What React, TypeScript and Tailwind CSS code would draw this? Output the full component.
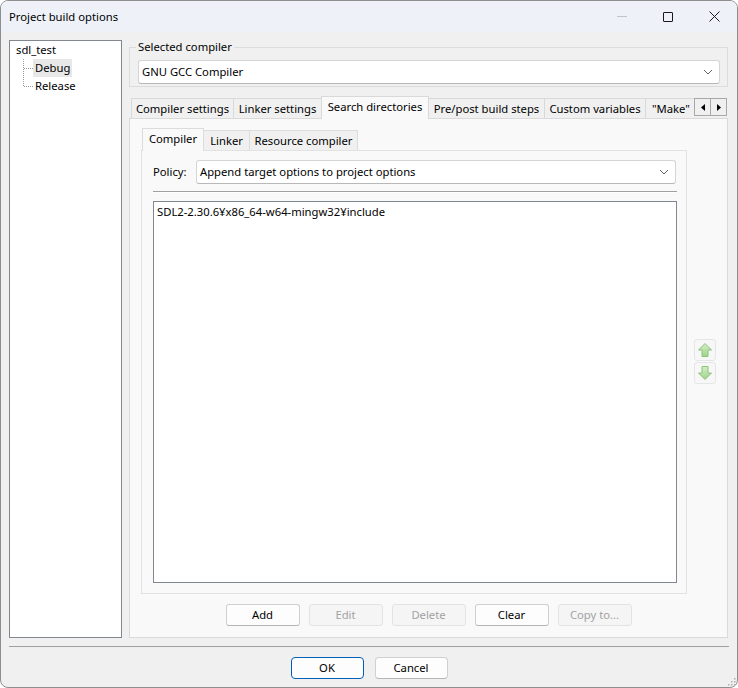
import React from "react";

function Chevron() {
  return (
    <svg width="10" height="6" viewBox="0 0 10 6" className="shrink-0">
      <path d="M1 1 L5 5 L9 1" fill="none" stroke="#606060" strokeWidth="1" />
    </svg>
  );
}

function Combo({ text, className }: { text: string; className: string }) {
  return (
    <div
      className={
        "h-[24px] bg-white border border-[#d5d5d5] border-b-[#b8b8b8] rounded-[3px] flex items-center pl-[3px] pr-[6px] " +
        className
      }
    >
      <span className="flex-1 leading-none">{text}</span>
      <Chevron />
    </div>
  );
}

function Btn({ label, disabled }: { label: string; disabled?: boolean }) {
  return (
    <div
      className={
        disabled
          ? "w-[74px] h-[22px] rounded-[3px] border border-[#e3e3e3] bg-[#f5f5f5] text-[#a2a2a2] flex items-center justify-center"
          : "w-[74px] h-[22px] rounded-[3px] border border-[#d0d0d0] border-b-[#b5b5b5] bg-[#fdfdfd] text-black flex items-center justify-center"
      }
    >
      {label}
    </div>
  );
}

function Arrow({ down }: { down?: boolean }) {
  return (
    <div className="w-[22px] h-[22px] rounded-[3px] border border-[#e6e6e6] bg-[#f7f7f7] flex items-center justify-center">
      <svg width="16" height="16" viewBox="0 0 16 16" className={down ? "rotate-180" : ""}>
        <defs>
          <linearGradient id={down ? "gd" : "gu"} x1="0" y1="0" x2="0" y2="1">
            <stop offset="0" stopColor={down ? "#9fd38a" : "#d4eec6"} />
            <stop offset="1" stopColor={down ? "#d4eec6" : "#9fd38a"} />
          </linearGradient>
        </defs>
        <path
          d="M8 1.5 L14.5 8 L11 8 L11 14.5 L5 14.5 L5 8 L1.5 8 Z"
          fill={`url(#${down ? "gd" : "gu"})`}
          stroke="#8cc47a"
          strokeWidth="1"
          strokeLinejoin="round"
        />
      </svg>
    </div>
  );
}

function TreeConnector({ last }: { last?: boolean }) {
  return (
    <svg width="10" height="18" viewBox="0 0 10 18" className="shrink-0">
      <line x1="0.5" y1="0" x2="0.5" y2={last ? 9 : 18} stroke="#9a9a9a" strokeDasharray="1 1" />
      <line x1="1" y1="9.5" x2="10" y2="9.5" stroke="#9a9a9a" strokeDasharray="1 1" />
    </svg>
  );
}

export default function App() {
  return (
    <div className="w-[738px] h-[688px] bg-[#f0f0f0] border border-[#8e8e8e] rounded-[8px] overflow-hidden flex flex-col text-[11.25px] text-black font-['Noto_Sans',sans-serif] relative">
      {/* Title bar */}
      <div className="h-[31px] bg-[#eef2f8] flex items-center shrink-0">
        <span className="pl-[8px] leading-none">Project build options</span>
        <div className="ml-auto flex h-full">
          <div className="w-[46px] h-full flex items-center justify-center">
            <div className="w-[10px] h-px bg-[#c4c4c4]" />
          </div>
          <div className="w-[46px] h-full flex items-center justify-center">
            <div className="w-[10px] h-[10px] border border-[#1a1a1a] rounded-[1px]" />
          </div>
          <div className="w-[46px] h-full flex items-center justify-center">
            <svg width="11" height="11" viewBox="0 0 11 11">
              <path d="M0.5 0.5 L10.5 10.5 M10.5 0.5 L0.5 10.5" stroke="#1a1a1a" strokeWidth="1" />
            </svg>
          </div>
        </div>
      </div>

      {/* Body */}
      <div className="h-[606px] pt-[8px] px-[8px] flex gap-[7px] shrink-0">
        {/* Tree */}
        <div className="w-[113px] h-[598px] bg-white border border-[#838790] flex flex-col">
          <div className="h-[18px] flex items-center pl-[4px]">
            <span className="px-[2px] leading-none">sdl_test</span>
          </div>
          <div className="h-[18px] flex items-center pl-[13px]">
            <TreeConnector />
            <span className="h-[18px] px-[2px] bg-[#e8e8e8] flex items-center leading-none">Debug</span>
          </div>
          <div className="h-[18px] flex items-center pl-[13px]">
            <TreeConnector last />
            <span className="px-[2px] leading-none">Release</span>
          </div>
        </div>

        {/* Right column */}
        <div className="w-[599px] flex flex-col">
          <fieldset className="border border-[#dcdcdc] pt-[6px] pb-[2px] pl-[8px] pr-[7px]">
            <legend className="-ml-[2px] px-[2px] leading-[14px]">Selected compiler</legend>
            <Combo text="GNU GCC Compiler" className="w-[582px]" />
          </fieldset>

          {/* Outer notebook tabs */}
          <div className="mt-[9px] h-[22px] flex items-end pl-[2px] relative z-10">
            <div className="w-[103px] h-[20px] border border-b-0 border-[#d9d9d9] bg-[#f0f0f0] flex items-center justify-center leading-none">
              Compiler settings
            </div>
            <div className="w-[89px] h-[20px] -ml-px border border-b-0 border-[#d9d9d9] bg-[#f0f0f0] flex items-center justify-center leading-none">
              Linker settings
            </div>
            <div className="w-[108px] h-[23px] -ml-px -mb-px border border-b-0 border-[#d9d9d9] bg-[#f9f9f9] flex items-center justify-center leading-none pb-[3px]">
              Search directories
            </div>
            <div className="w-[117px] h-[20px] -ml-px border border-b-0 border-[#d9d9d9] bg-[#f0f0f0] flex items-center justify-center leading-none">
              Pre/post build steps
            </div>
            <div className="w-[102px] h-[20px] -ml-px border border-b-0 border-[#d9d9d9] bg-[#f0f0f0] flex items-center justify-center leading-none">
              Custom variables
            </div>
            <div className="w-[49px] h-[20px] -ml-px border border-b-0 border-r-0 border-[#d9d9d9] bg-[#f0f0f0] flex items-center pl-[6px] leading-none whitespace-nowrap">
              "Make"
            </div>
            <div className="flex self-start mt-[2px]">
              <div className="w-[17px] h-[18px] border border-[#a8a8a8] bg-[#f0f0f0] flex items-center justify-center">
                <svg width="4" height="7" viewBox="0 0 4 7"><path d="M4 0 L0 3.5 L4 7 Z" fill="#000" /></svg>
              </div>
              <div className="w-[17px] h-[18px] -ml-px border border-[#a8a8a8] bg-[#f0f0f0] flex items-center justify-center">
                <svg width="4" height="7" viewBox="0 0 4 7"><path d="M0 0 L4 3.5 L0 7 Z" fill="#000" /></svg>
              </div>
            </div>
          </div>

          {/* Outer panel */}
          <div className="h-[520px] border border-[#dadada] bg-[#f9f9f9] pt-[9px] pl-[11px] pb-[11px] flex flex-col">
            <div className="flex items-center gap-[7px]">
              {/* Inner notebook */}
              <div className="w-[546px] flex flex-col">
                <div className="h-[22px] flex items-end pl-[1px] relative z-10">
                  <div className="w-[62px] h-[23px] -mb-px border border-b-0 border-[#dcdcdc] bg-[#f9f9f9] flex items-center justify-center leading-none pb-[3px]">
                    Compiler
                  </div>
                  <div className="w-[47px] h-[20px] -ml-px border border-b-0 border-[#dcdcdc] bg-[#f0f0f0] flex items-center justify-center leading-none">
                    Linker
                  </div>
                  <div className="w-[109px] h-[20px] -ml-px border border-b-0 border-[#dcdcdc] bg-[#f0f0f0] flex items-center justify-center leading-none">
                    Resource compiler
                  </div>
                </div>
                <div className="h-[444px] border border-[#e2e2e2] bg-[#f9f9f9] pt-[9px] pl-[11px] pr-[9px] flex flex-col">
                  <div className="flex items-center">
                    <span className="w-[43px] leading-none">Policy:</span>
                    <Combo text="Append target options to project options" className="w-[480px]" />
                  </div>
                  <div className="mt-[7px] h-[2px] border-t border-[#a0a0a0] border-b border-b-white" />
                  <div className="mt-[8px] h-[382px] bg-white border border-[#838790] pl-[3px] pt-[1px]">
                    <div className="h-[18px] flex items-center leading-none">
                      SDL2-2.30.6¥x86_64-w64-mingw32¥include
                    </div>
                  </div>
                </div>
              </div>
              {/* Arrows */}
              <div className="flex flex-col gap-[1px]">
                <Arrow />
                <Arrow down />
              </div>
            </div>
            <div className="mt-[10px] flex justify-center gap-[9px] pr-[11px]">
              <Btn label="Add" />
              <Btn label="Edit" disabled />
              <Btn label="Delete" disabled />
              <Btn label="Clear" />
              <Btn label="Copy to..." disabled />
            </div>
          </div>
        </div>
      </div>

      {/* Footer */}
      <div className="mx-[8px] mt-[8px] h-px bg-[#a0a0a0]" />
      <div className="mt-[10px] flex justify-center gap-[11px]">
        <div className="w-[73px] h-[22px] rounded-[4px] border border-[#005fb8] bg-[#fdfdfd] flex items-center justify-center">
          OK
        </div>
        <div className="w-[73px] h-[22px] rounded-[4px] border border-[#d0d0d0] border-b-[#b5b5b5] bg-[#fdfdfd] flex items-center justify-center">
          Cancel
        </div>
      </div>
      {/* Resize grip */}
      <svg className="absolute right-[1px] bottom-[1px]" width="8" height="8" viewBox="0 0 8 8">
        <rect x="6" y="0" width="1.5" height="1.5" fill="#b0b0b0" />
        <rect x="3" y="3" width="1.5" height="1.5" fill="#b0b0b0" />
        <rect x="6" y="3" width="1.5" height="1.5" fill="#b0b0b0" />
        <rect x="0" y="6" width="1.5" height="1.5" fill="#b0b0b0" />
        <rect x="3" y="6" width="1.5" height="1.5" fill="#b0b0b0" />
        <rect x="6" y="6" width="1.5" height="1.5" fill="#b0b0b0" />
      </svg>
    </div>
  );
}
